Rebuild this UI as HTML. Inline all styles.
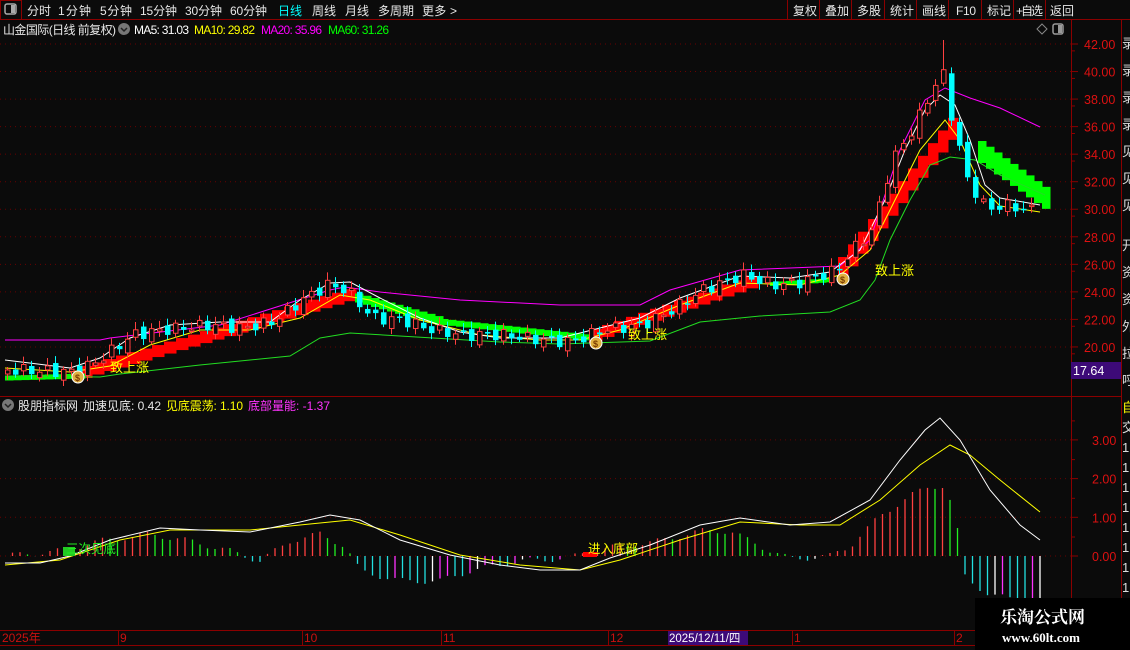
<!DOCTYPE html>
<html><head><meta charset="utf-8"><style>
body{margin:0;width:1130px;height:650px;background:#0b0b0b;overflow:hidden;font-family:"Liberation Sans","Noto Sans CJK SC",sans-serif;}
svg{position:absolute;left:0;top:0}
</style></head><body>
<svg id="s" width="1130" height="650" xmlns="http://www.w3.org/2000/svg" font-family="Liberation Sans, Noto Sans CJK SC, sans-serif">
<rect width="1130" height="650" fill="#0b0b0b"/>
<line x1="0" y1="19.5" x2="1130" y2="19.5" stroke="#8b0000"/>
<rect x="0.5" y="0.5" width="21" height="19" fill="none" stroke="#8b0000"/>
<rect x="5" y="4" width="11" height="10" rx="2" fill="none" stroke="#aaa" stroke-width="1.5"/><rect x="11" y="5" width="4" height="8" fill="#aaa"/>
<g font-size="12" fill="#e8e8e8" lengthAdjust="spacingAndGlyphs">
<text x="27" y="15" textLength="24">分时</text><text x="58" y="15" textLength="33">1分钟</text><text x="100" y="15" textLength="32">5分钟</text><text x="140" y="15" textLength="37">15分钟</text><text x="185" y="15" textLength="37">30分钟</text><text x="230" y="15" textLength="37">60分钟</text>
<text x="278" y="15" fill="#00ffff" textLength="24">日线</text><text x="312" y="15" textLength="24">周线</text><text x="345" y="15" textLength="24">月线</text><text x="378" y="15" textLength="36">多周期</text><text x="422" y="15" textLength="35">更多 &gt;</text>
<text x="793" y="15" textLength="24">复权</text><text x="825" y="15" textLength="24">叠加</text><text x="857" y="15" textLength="24">多股</text><text x="890" y="15" textLength="24">统计</text><text x="922" y="15" textLength="24">画线</text><text x="956" y="15" textLength="20">F10</text><text x="987" y="15" textLength="24">标记</text><text x="1016" y="15" textLength="27">+自选</text><text x="1050" y="15" textLength="24">返回</text>
</g>
<g stroke="#8b0000"><line x1="787.5" y1="0" x2="787.5" y2="19"/><line x1="819.5" y1="0" x2="819.5" y2="19"/><line x1="851.5" y1="0" x2="851.5" y2="19"/><line x1="884.5" y1="0" x2="884.5" y2="19"/><line x1="916.5" y1="0" x2="916.5" y2="19"/><line x1="948.5" y1="0" x2="948.5" y2="19"/><line x1="981.5" y1="0" x2="981.5" y2="19"/><line x1="1013.5" y1="0" x2="1013.5" y2="19"/><line x1="1045.5" y1="0" x2="1045.5" y2="19"/></g>
<g font-size="12" lengthAdjust="spacingAndGlyphs">
<text x="3" y="34" fill="#e8e8e8" textLength="113">山金国际(日线 前复权)</text>
<circle cx="124" cy="29" r="6" fill="#777"/><path d="M121 28l3 3 3-3" stroke="#222" fill="none" stroke-width="1.5"/>
<text x="134" y="34" fill="#fff" textLength="55">MA5: 31.03</text><text x="194" y="34" fill="#ffff00" textLength="61">MA10: 29.82</text><text x="261" y="34" fill="#ff00ff" textLength="61">MA20: 35.96</text><text x="328" y="34" fill="#00ff00" textLength="61">MA60: 31.26</text>
</g>
<path d="M1042 24l5 5-5 5-5-5z" fill="none" stroke="#888"/>
<rect x="1053" y="24" width="10" height="10" rx="2" fill="none" stroke="#999" stroke-width="1.5"/><rect x="1058" y="25" width="4" height="8" fill="#999"/>
<line x1="1071.5" y1="20" x2="1071.5" y2="630" stroke="#8b0000"/>
<line x1="1121.5" y1="20" x2="1121.5" y2="650" stroke="#8b0000"/>
<line x1="0" y1="396.5" x2="1122" y2="396.5" stroke="#8b0000"/>
<line x1="0" y1="630.5" x2="1130" y2="630.5" stroke="#8b0000"/>
<line x1="0" y1="645.5" x2="1130" y2="645.5" stroke="#8b0000"/>
<g id="grid"></g>
<rect x="1071" y="362" width="50" height="17" fill="#3d0a78"/>
<text x="1073" y="375" fill="#fff" font-size="12.5">17.64</text>
<g font-size="13" fill="#ddd"><text x="1122" y="48">录</text><text x="1122" y="75">录</text><text x="1122" y="102">录</text><text x="1122" y="129">录</text><text x="1122" y="156">见</text><text x="1122" y="183">见</text><text x="1122" y="210">见</text><text x="1122" y="250">开</text><text x="1122" y="277">资</text><text x="1122" y="304">资</text><text x="1122" y="331">外</text><text x="1122" y="358">拉</text><text x="1122" y="385">呼</text>
<text x="1122" y="412" fill="#ffff00">自</text><text x="1122" y="432">交</text><text x="1122" y="452">1</text><text x="1122" y="472">1</text><text x="1122" y="492">1</text><text x="1122" y="512">1</text><text x="1122" y="532">1</text><text x="1122" y="552">1</text><text x="1122" y="572">1</text><text x="1122" y="592">1</text></g>
<g id="chart"></g>
<g font-size="12" lengthAdjust="spacingAndGlyphs">
<circle cx="8" cy="405" r="6" fill="#777"/><path d="M5 404l3 3 3-3" stroke="#222" fill="none" stroke-width="1.5"/>
<text x="18" y="410" fill="#e8e8e8" textLength="60">股朋指标网</text><text x="83" y="410" fill="#e8e8e8" textLength="78">加速见底: 0.42</text><text x="166" y="410" fill="#ffff00" textLength="77">见底震荡: 1.10</text><text x="248" y="410" fill="#ff33ff" textLength="82">底部量能: -1.37</text>
</g>
<g font-size="12" fill="#cc1010"><text x="2" y="642">2025年</text><text x="120" y="642">9</text><text x="304" y="642">10</text><text x="443" y="642">11</text><text x="610" y="642">12</text><text x="794" y="642">1</text><text x="956" y="642">2</text></g>
<g stroke="#8b0000"><line x1="118.5" y1="631" x2="118.5" y2="645"/><line x1="302.5" y1="631" x2="302.5" y2="645"/><line x1="441.5" y1="631" x2="441.5" y2="645"/><line x1="608.5" y1="631" x2="608.5" y2="645"/><line x1="792.5" y1="631" x2="792.5" y2="645"/><line x1="954.5" y1="631" x2="954.5" y2="645"/></g>
<rect x="668" y="631" width="80" height="14" fill="#3d0a78"/><text x="669" y="642" font-size="11.5" fill="#fff">2025/12/11/四</text>
<rect x="975" y="598" width="155" height="52" fill="#000"/>
<text x="1000" y="623" font-size="17" font-weight="bold" fill="#fff" font-family="Liberation Serif, Noto Serif CJK SC, serif">乐淘公式网</text>
<text x="1002" y="642" font-size="13" font-weight="bold" fill="#fff" font-family="Liberation Serif, serif">www.60lt.com</text>
</svg>
<script>
const NS="http://www.w3.org/2000/svg";
const g=document.getElementById('chart'),gr=document.getElementById('grid');
function el(t,a,p){const e=document.createElementNS(NS,t);for(const k in a)e.setAttribute(k,a[k]);(p||g).appendChild(e);return e;}
function interp(pts,x){if(x<=pts[0][0])return pts[0][1];for(let i=1;i<pts.length;i++){if(x<=pts[i][0]){const[a,b]=pts[i-1],[c,d]=pts[i];return b+(d-b)*(x-a)/(c-a);}}return pts[pts.length-1][1];}
function poly(pts,col,w){el('polyline',{points:pts.map(p=>p.join(',')).join(' '),fill:'none',stroke:col,'stroke-width':w||1});}
for(let p=20;p<=42;p+=2){const y=44+(42-p)*13.77;
 el('line',{x1:0,y1:y,x2:1071,y2:y,stroke:'#6a0000','stroke-dasharray':'1 4'},gr);
 el('line',{x1:1071,y1:y,x2:1078,y2:y,stroke:'#8b0000'},gr);
 el('line',{x1:1071,y1:y+13.77/2,x2:1075,y2:y+13.77/2,stroke:'#8b0000'},gr);
 const t=el('text',{x:1084,y:y+5,fill:'#dd1111','font-size':12.5},gr);t.textContent=p.toFixed(2);}
for(let v=0;v<=3;v++){const y=556-v*38.7;
 el('line',{x1:0,y1:y,x2:1071,y2:y,stroke:'#6a0000','stroke-dasharray':'1 4'},gr);
 el('line',{x1:1071,y1:y,x2:1078,y2:y,stroke:'#8b0000'},gr);
 el('line',{x1:1071,y1:y-19,x2:1075,y2:y-19,stroke:'#8b0000'},gr);
 const t=el('text',{x:1092,y:y+5,fill:'#dd1111','font-size':12.5},gr);t.textContent=v.toFixed(2);}
function stairs(a,b,col,h,st){st=st||8;for(let x=a[0];x<b[0];x+=st){const y=a[1]+(b[1]-a[1])*(x-a[0])/(b[0]-a[0]);el('rect',{x:x,y:y-h/2,width:st+0.5,height:h,fill:col});}}
stairs([80,372],[355,292],'#ff0000',12,12);stairs([590,335],[750,281],'#ff0000',12,12);stairs([838,268],[955,120],'#ff0000',22,10);
stairs([355,298],[440,322],'#00ff00',9);stairs([440,322],[590,338],'#00ff00',6);stairs([770,284],[830,280],'#00ff00',4);
stairs([978,152],[1045,200],'#00ff00',22);stairs([5,378],[80,376],'#00ff00',5);
const mag=[[5,340],[100,340],[110,338],[220,325],[330,290],[345,287],[380,292],[460,300],[560,305],[640,305],[670,290],[740,270],[840,266],[870,240],[900,150],[925,100],[945,88],[970,98],[1000,108],[1040,127]];
const grn=[[5,376],[100,377],[120,374],[200,365],[290,356],[320,338],[350,333],[500,342],[560,344],[650,341],[700,322],[760,316],[830,312],[860,300],[875,280],[890,240],[910,200],[930,165],[950,157],[975,160],[1000,175],[1045,195]];
const wht=[[5,360],[70,368],[100,358],[130,338],[170,325],[220,322],[270,322],[300,300],[330,283],[350,282],[380,298],[420,318],[460,332],[500,338],[560,338],[600,328],[640,318],[680,298],[740,276],[790,278],[830,272],[860,250],[885,200],[905,150],[925,110],[940,95],[955,105],[970,140],[985,185],[1000,198],[1040,205]];
const yel=[[5,368],[70,372],[110,366],[150,345],[200,330],[250,330],[300,318],[340,295],[370,300],[420,320],[480,335],[540,340],[580,340],[620,330],[680,305],[740,283],[800,285],[840,275],[870,250],[895,200],[920,150],[945,120],[960,140],[980,185],[1000,206],[1040,212]];
poly(mag,'#ff00ff');poly(grn,'#22dd22');poly(yel,'#ffff00');poly(wht,'#ffffff');
const cl=[[5,370],[75,372],[100,358],[130,335],[160,330],[210,325],[240,328],[270,322],[300,300],[325,285],[345,290],[370,318],[400,320],[430,330],[460,335],[500,335],[540,340],[570,342],[600,330],[640,325],[670,310],[700,290],[740,275],[770,285],[800,282],[835,270],[850,250],[870,230],[890,160],[910,130],[925,100],[940,70],[950,120],[965,180],[985,210],[1000,205],[1030,210],[1036,210]];
let prev=370,i=0;
for(let x=5;x<=1036;x+=8,i++){const c=interp(cl,x)+Math.sin(i*2.3)*6;const o=prev+Math.cos(i*1.7)*4;prev=c;
 const up=c<o,col=up?'#ff4040':'#00ffff';const top=Math.min(o,c),bh=Math.max(1.5,Math.abs(o-c));
 const hi=top-3-Math.abs(Math.sin(i*0.9))*5,lo=top+bh+2+Math.abs(Math.cos(i*1.3))*4;
 el('line',{x1:x+2.5,y1:(x>935&&x<945)?40:hi,x2:x+2.5,y2:lo,stroke:col});
 if(up)el('rect',{x:x+0.5,y:top,width:4.5,height:bh,fill:'#0b0b0b',stroke:col});else el('rect',{x:x,y:top,width:5.5,height:bh,fill:col});}
function sig(x,y,tx,ty){el('circle',{cx:x,cy:y,r:6,fill:'#e0b040',stroke:'#fff','stroke-width':1});const t=el('text',{x:x-3,y:y+4,'font-size':9,fill:'#7a3a00','font-weight':'bold'});t.textContent='$';
 const s=el('text',{x:tx,y:ty,'font-size':13,fill:'#ffff00'});s.textContent='致上涨';}
sig(78,377,110,372);sig(596,343,628,339);sig(843,279,875,275);
const bar=[[5,0],[60,5],[100,15],[150,22],[190,15],[230,5],[260,-5],[290,15],[320,22],[345,10],[360,-15],[400,-25],[440,-25],[470,-15],[520,-5],[570,-2],[590,5],[620,10],[660,15],[700,25],[730,25],[760,10],[790,-3],[830,0],[850,10],[880,40],[910,60],[930,70],[945,70],[955,40],[965,-20],[990,-40],[1040,-45]];
let pb=0;i=0;
for(let x=5;x<=1045;x+=7.5,i++){const v=interp(bar,x)+Math.sin(i*1.1)*3;const rising=v>pb;pb=v;
 let col;if(v>=0)col=rising?'#ff4040':'#22ee22';else col=rising?(i%3?'#ff33ff':'#ffffff'):'#22e0e0';
 el('line',{x1:x,y1:556,x2:x,y2:556-v,stroke:col,'stroke-width':1.3});}
const iw=[[5,563],[40,563],[70,556],[110,540],[160,528],[200,530],[250,532],[300,522],[330,515],[360,520],[400,540],[450,555],[500,565],[540,570],[580,570],[610,558],[650,545],[700,525],[740,518],[790,525],[830,522],[870,500],[900,460],[925,430],[940,418],[960,440],[990,490],[1020,525],[1040,540]];
const iy=[[5,565],[60,560],[120,540],[170,530],[250,530],[300,525],[350,520],[400,535],[460,555],[520,565],[580,570],[620,560],[680,540],[740,522],[800,525],[840,525],[880,500],[920,465],[950,445],[970,455],[1000,480],[1040,512]];
poly(iy,'#ffff00');poly(iw,'#ffffff');
el('rect',{x:63,y:547,width:12,height:9,fill:'#22cc22'});let t=el('text',{x:66,y:553,'font-size':12.5,fill:'#22ee22'});t.textContent='三次见底';
el('rect',{x:583,y:552,width:14,height:5,fill:'#ff0000'});t=el('text',{x:588,y:553,'font-size':12.5,fill:'#ffff00'});t.textContent='进入底部';
</script>
</body></html>
